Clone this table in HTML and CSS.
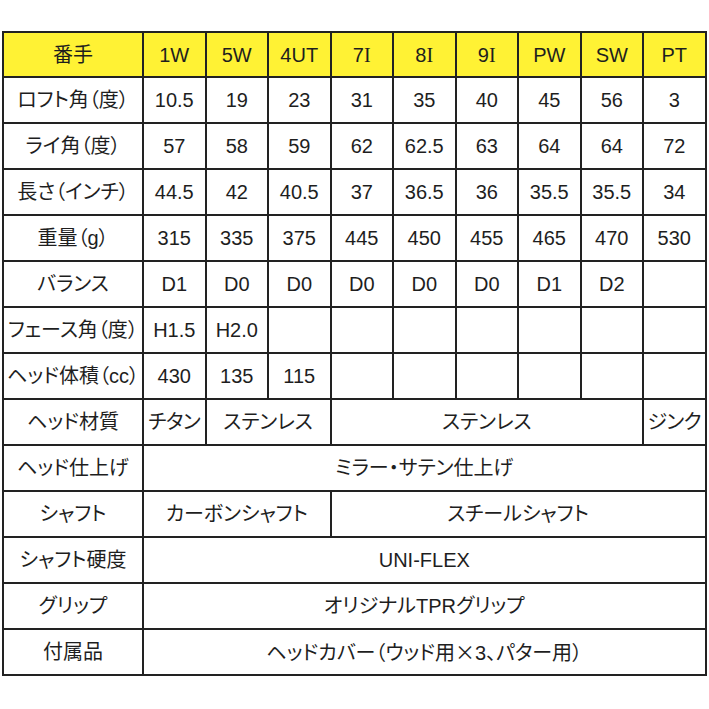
FILE: index.html
```html
<!DOCTYPE html>
<html lang="ja">
<head>
<meta charset="utf-8">
<title>スペック表</title>
<link rel="stylesheet" href="styles.css">
</head>
<body>
<table class="spec">
  <colgroup>
    <col class="c-head">
    <col class="c-val"><col class="c-val"><col class="c-val"><col class="c-val"><col class="c-val"><col class="c-val"><col class="c-val"><col class="c-val"><col class="c-val">
  </colgroup>
  <tr class="hdr">
    <td>番手</td><td>1W</td><td>5W</td><td>4UT</td><td>7<span class="serif">I</span></td><td>8<span class="serif">I</span></td><td>9<span class="serif">I</span></td><td>PW</td><td>SW</td><td>PT</td>
  </tr>
  <tr><td>ロフト角（度）</td><td>10.5</td><td>19</td><td>23</td><td>31</td><td>35</td><td>40</td><td>45</td><td>56</td><td>3</td></tr>
  <tr><td>ライ角（度）</td><td>57</td><td>58</td><td>59</td><td>62</td><td>62.5</td><td>63</td><td>64</td><td>64</td><td>72</td></tr>
  <tr><td>長さ（インチ）</td><td>44.5</td><td>42</td><td>40.5</td><td>37</td><td>36.5</td><td>36</td><td>35.5</td><td>35.5</td><td>34</td></tr>
  <tr><td>重量（g）</td><td>315</td><td>335</td><td>375</td><td>445</td><td>450</td><td>455</td><td>465</td><td>470</td><td>530</td></tr>
  <tr><td>バランス</td><td>D1</td><td>D0</td><td>D0</td><td>D0</td><td>D0</td><td>D0</td><td>D1</td><td>D2</td><td></td></tr>
  <tr><td>フェース角（度）</td><td>H1.5</td><td>H2.0</td><td></td><td></td><td></td><td></td><td></td><td></td><td></td></tr>
  <tr><td>ヘッド体積（cc）</td><td>430</td><td>135</td><td>115</td><td></td><td></td><td></td><td></td><td></td><td></td></tr>
  <tr><td>ヘッド材質</td><td class="tight">チタン</td><td colspan="2">ステンレス</td><td colspan="5">ステンレス</td><td class="tight">ジンク</td></tr>
  <tr><td>ヘッド仕上げ</td><td colspan="9">ミラー・サテン仕上げ</td></tr>
  <tr><td>シャフト</td><td colspan="3">カーボンシャフト</td><td colspan="6">スチールシャフト</td></tr>
  <tr><td>シャフト硬度</td><td colspan="9">UNI-FLEX</td></tr>
  <tr><td>グリップ</td><td colspan="9">オリジナルTPRグリップ</td></tr>
  <tr><td>付属品</td><td colspan="9">ヘッドカバー（ウッド用<span class="cjk">×</span>3、パター用）</td></tr>
</table>
</body>
</html>
```

FILE: styles.css
```css
html, body {
  margin: 0;
  padding: 0;
  background: #ffffff;
}

body {
  padding: 31px 0 0 2px;
}

.spec {
  border-collapse: collapse;
  table-layout: fixed;
  width: 704px;
  font-family: "Liberation Sans", "Noto Sans CJK JP", sans-serif;
  font-size: 20px;
  color: #1e1e1e;
  font-feature-settings: "palt";
}

.c-head {
  width: 140px;
}

.c-val {
  width: 62.5px;
}

.spec tr {
  height: 46px;
}

.spec tr.hdr {
  height: 45px;
}

.spec td {
  border: 2px solid #222222;
  padding: 0;
  text-align: center;
  vertical-align: middle;
  white-space: nowrap;
  overflow: hidden;
  line-height: 1;
}

.hdr td {
  background: #fff234;
}

.serif {
  font-family: "Liberation Serif", serif;
}

.cjk {
  font-family: "Noto Sans CJK JP", sans-serif;
  font-feature-settings: normal;
}

.tight {
  letter-spacing: -0.5px;
}
```
